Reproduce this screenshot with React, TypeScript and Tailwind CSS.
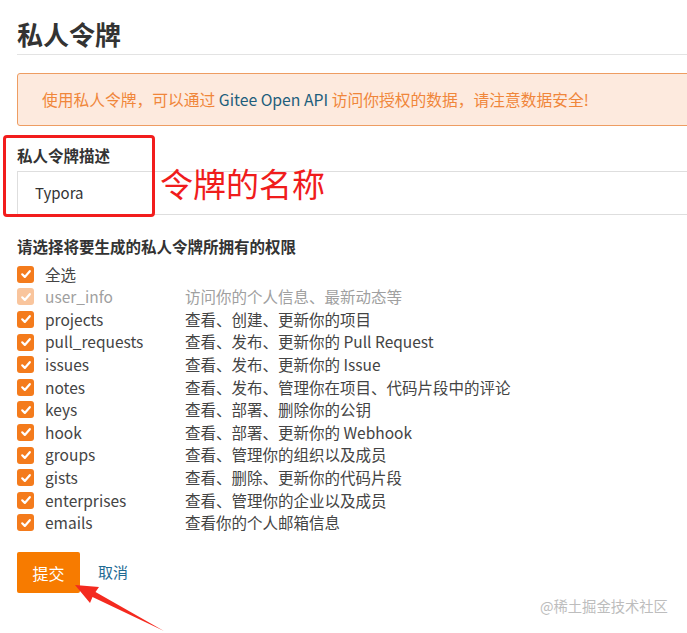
import React from 'react';

interface Scope {
    name: string;
    desc: string;
    disabled?: boolean;
}

const scopes: Scope[] = [
    { name: 'user_info', desc: '访问你的个人信息、最新动态等', disabled: true },
    { name: 'projects', desc: '查看、创建、更新你的项目' },
    { name: 'pull_requests', desc: '查看、发布、更新你的 Pull Request' },
    { name: 'issues', desc: '查看、发布、更新你的 Issue' },
    { name: 'notes', desc: '查看、发布、管理你在项目、代码片段中的评论' },
    { name: 'keys', desc: '查看、部署、删除你的公钥' },
    { name: 'hook', desc: '查看、部署、更新你的 Webhook' },
    { name: 'groups', desc: '查看、管理你的组织以及成员' },
    { name: 'gists', desc: '查看、删除、更新你的代码片段' },
    { name: 'enterprises', desc: '查看、管理你的企业以及成员' },
    { name: 'emails', desc: '查看你的个人邮箱信息' },
];

function CheckBox({ faded }: { faded?: boolean }) {
    return (
        <span
            className={`flex items-center justify-center w-[17px] h-[17px] rounded-[3px] shrink-0 ${faded ? 'bg-[#f9c59d]' : 'bg-[#f47b1c]'}`}
        >
            <svg width="12" height="12" viewBox="0 0 12 12" fill="none">
                <path d="M2.2 6.3 L4.8 8.9 L9.8 3.2" stroke="white" strokeWidth="2.2" strokeLinecap="round" strokeLinejoin="round" />
            </svg>
        </span>
    );
}

export default function App() {
    return (
        <div
            className="relative w-[687px] h-[633px] overflow-hidden bg-white text-[#333]"
            style={{ fontFamily: '"Noto Sans CJK SC", "Noto Sans", sans-serif' }}
        >
            <div className="w-[740px] pl-[17px]">
                <h1 className="pt-[18px] pb-[4px] text-[26px] leading-[32px] font-bold text-[#333] border-b border-[#e3e3e3]">
                    私人令牌
                </h1>

                <div className="mt-[18px] h-[53px] flex items-center pl-[24px] rounded-[3px] border border-[#ee9d62] bg-[#fdeade] text-[15.75px] text-[#f0863a]">
                    使用私人令牌，可以通过&nbsp;<span className="text-[#1e5e7c]">Gitee Open API</span>&nbsp;访问你授权的数据，请注意数据安全!
                </div>

                <div className="mt-[19px] text-[15.5px] leading-[20px] font-bold text-[#333]">私人令牌描述</div>
                <div className="mt-[6px] h-[44px] flex items-center pl-[17px] border border-[#dedede] text-[15px] text-[#333]">
                    Typora
                </div>

                <div className="mt-[21px] text-[15.5px] leading-[20px] font-bold text-[#333]">
                    请选择将要生成的私人令牌所拥有的权限
                </div>

                <div className="mt-[7px] flex flex-col">
                    <div className="flex items-center h-[22.6px]">
                        <CheckBox />
                        <span className="ml-[11px] text-[15.5px] text-[#444]">全选</span>
                    </div>
                    {scopes.map((s) => (
                        <div key={s.name} className="flex items-center h-[22.6px]">
                            <CheckBox faded={s.disabled} />
                            <span className={`ml-[11px] w-[140px] text-[15.5px] ${s.disabled ? 'text-[#a0a0a0]' : 'text-[#444]'}`}>
                                {s.name}
                            </span>
                            <span className={`text-[15.5px] ${s.disabled ? 'text-[#a0a0a0]' : 'text-[#444]'}`}>{s.desc}</span>
                        </div>
                    ))}
                </div>

                <div className="mt-[18px] flex items-center">
                    <button className="w-[63px] h-[41px] rounded-[2px] bg-[#f77b00] text-white text-[16px]">提交</button>
                    <a className="ml-[18px] text-[15px] text-[#1f6a93]">取消</a>
                </div>
            </div>

            {/* annotations */}
            <div className="absolute left-[3px] top-[135px] w-[152px] h-[82px] border-[3px] border-[#f21d1d] rounded-[4px]" />
            <div className="absolute left-[160px] top-[163px] text-[33px] leading-[40px] text-[#f01c1c]">令牌的名称</div>
            <svg className="absolute left-0 top-0" width="687" height="633" viewBox="0 0 687 633">
                <polygon points="75,585 99,587 95.5,592 164,631 92.5,597 90,603" fill="#f42a1f" />
            </svg>
            <div className="absolute left-[540px] top-[596px] text-[14.3px] leading-[20px] text-[#bdbdbd]">@稀土掘金技术社区</div>
        </div>
    );
}
